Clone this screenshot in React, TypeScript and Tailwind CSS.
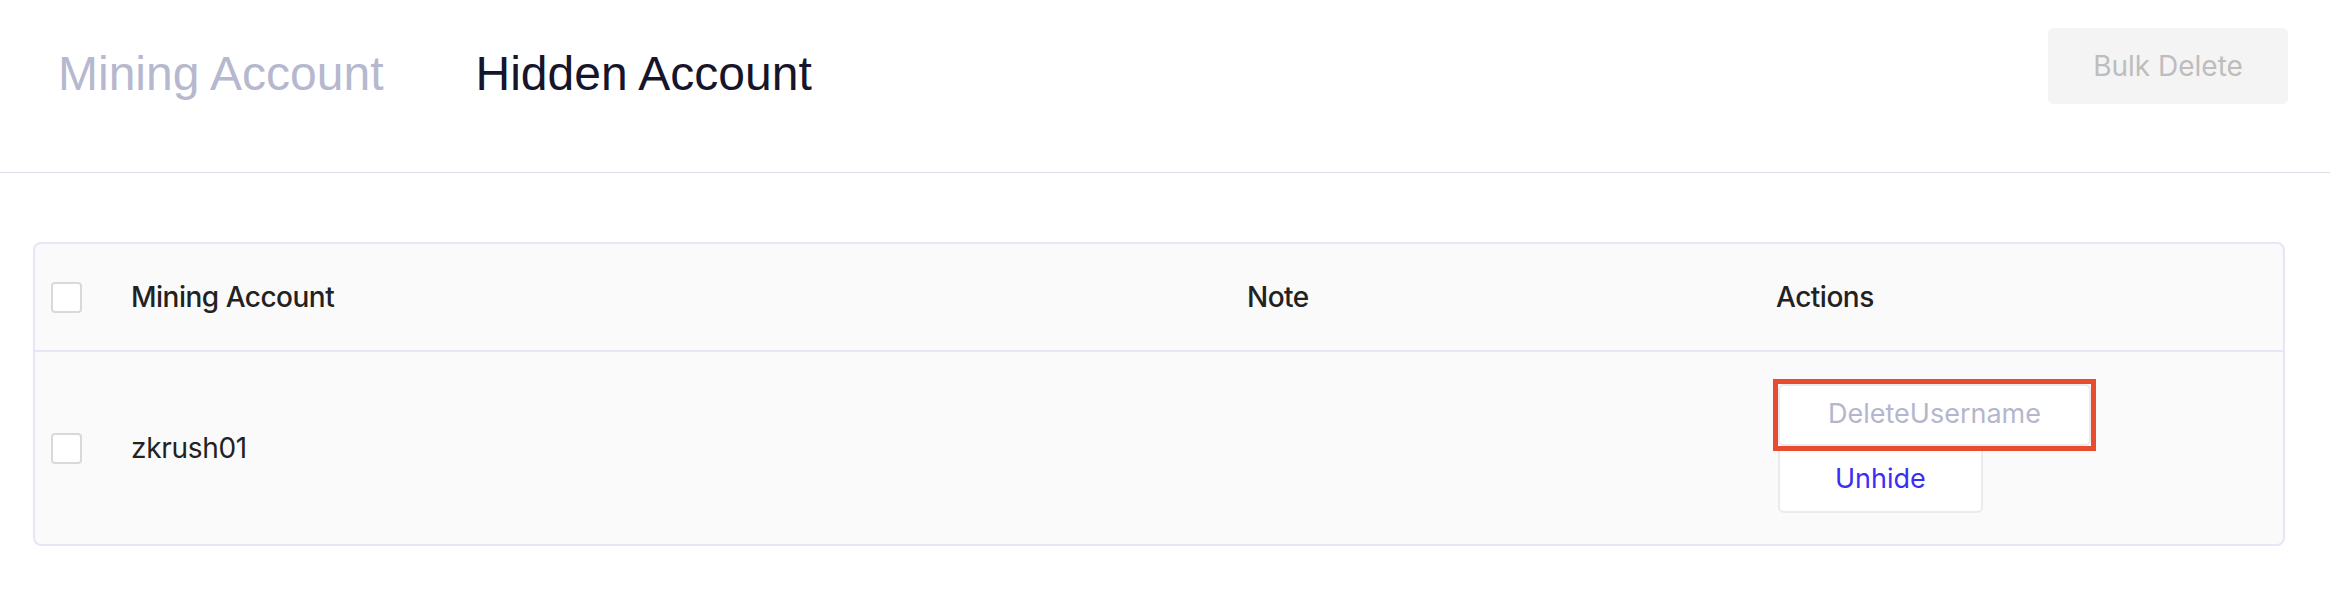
export default function App() {
  return (
    <div className="min-h-screen w-full bg-white font-['Inter',sans-serif]">
      {/* top bar: tabs + bulk action */}
      <div className="flex h-[172px] items-start justify-between">
        <div className="flex items-start gap-[92px] pl-[58px] pt-[50px] font-['Liberation_Sans',Arial,sans-serif] text-[48px] leading-[48px]">
          <button className="text-[#b6b8cf]">Mining Account</button>
          <button className="text-[#16152b]">Hidden Account</button>
        </div>
        <button
          disabled
          className="mr-[42px] mt-[28px] h-[76px] w-[240px] rounded-[6px] bg-[#f4f4f4] text-[28px] text-[#bdbdbd]"
        >
          Bulk Delete
        </button>
      </div>
      <div className="h-px w-full bg-[#dcdce4]" />

      {/* table */}
      <div className="ml-[33px] mt-[69px] w-[2252px] overflow-hidden rounded-[8px] border-2 border-[#e5e6f7] bg-[#fafafa]">
        <div className="grid h-[108px] grid-cols-[96px_1116px_529px_1fr] items-center border-b-2 border-[#e5e6f7] text-[28px] font-medium tracking-[-0.5px] text-[#222]">
          <div className="pl-[16px]">
            <Checkbox />
          </div>
          <div>Mining Account</div>
          <div>Note</div>
          <div>Actions</div>
        </div>
        <div className="grid h-[192px] grid-cols-[96px_1116px_529px_1fr] items-center text-[28px] tracking-[-0.3px] text-[#222]">
          <div className="pl-[16px]">
            <Checkbox />
          </div>
          <div>zkrush01</div>
          <div />
          <div className="flex flex-col items-start pl-[2px] text-[27px] tracking-normal">
            <div className="relative z-10">
              <button className="h-[62px] rounded-[6px] border-2 border-[#ebebef] bg-white px-[48px] text-[#b5b6cd]">
                DeleteUsername
              </button>
              <span className="pointer-events-none absolute -inset-[5px] border-[5px] border-[#e94b2e]" />
            </div>
            <button className="h-[67px] rounded-[6px] border-2 border-[#ebebef] bg-white px-[55px] text-[#3a2df4]">
              Unhide
            </button>
          </div>
        </div>
      </div>
    </div>
  );
}

function Checkbox() {
  return <div className="h-[31px] w-[31px] rounded-[4px] border-2 border-[#d9d9d9] bg-white" />;
}
